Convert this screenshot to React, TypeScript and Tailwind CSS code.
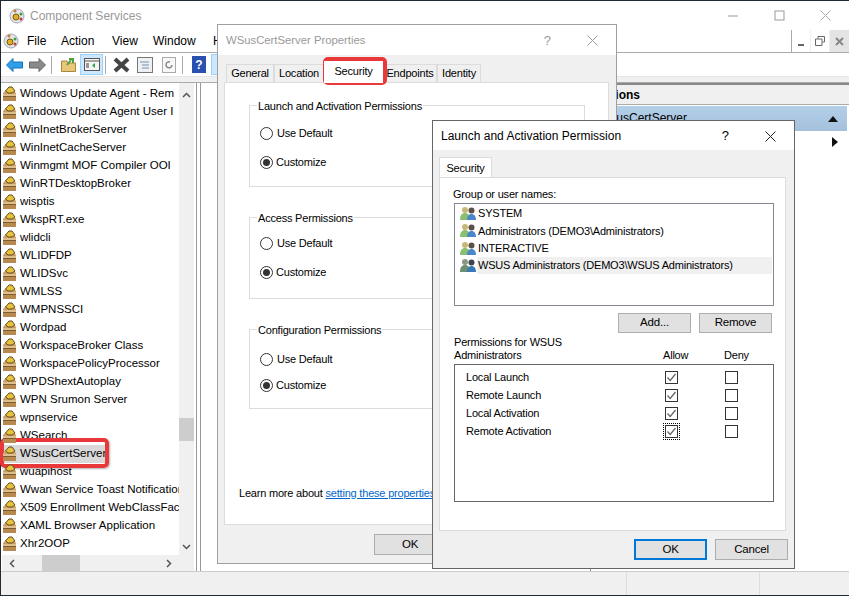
const services = [
  'Windows Update Agent - Rem',
  'Windows Update Agent User I',
  'WinInetBrokerServer',
  'WinInetCacheServer',
  'Winmgmt MOF Compiler OOI',
  'WinRTDesktopBroker',
  'wisptis',
  'WkspRT.exe',
  'wlidcli',
  'WLIDFDP',
  'WLIDSvc',
  'WMLSS',
  'WMPNSSCI',
  'Wordpad',
  'WorkspaceBroker Class',
  'WorkspacePolicyProcessor',
  'WPDShextAutoplay',
  'WPN Srumon Server',
  'wpnservice',
  'WSearch',
  'WSusCertServer',
  'wuapihost',
  'Wwan Service Toast Notification',
  'X509 Enrollment WebClassFactory',
  'XAML Browser Application',
  'Xhr2OOP',
];

const groups = [
  'SYSTEM',
  'Administrators (DEMO3\\Administrators)',
  'INTERACTIVE',
  'WSUS Administrators (DEMO3\\WSUS Administrators)',
];

const perms = ['Local Launch', 'Remote Launch', 'Local Activation', 'Remote Activation'];

const BoxIcon = () => (
  <svg width="14" height="16" viewBox="0 0 14 16" className="relative z-10 shrink-0">
    <path d="M0 7L3 4L10 4L13 7L13 15L0 15Z" fill="#c9a06a" />
    <path d="M2.500 5L6 1L9 1L12 5L9 7L5 7Z" fill="#e9c23c" stroke="#5f4b1c" strokeWidth="1" />
    <rect x="0" y="8" width="13" height="2" fill="#e0bd8c" />
    <rect x="0" y="10" width="13" height="1" fill="#7d5c30" />
    <rect x="0" y="11" width="13" height="4" fill="#b88a52" />
  </svg>
);

const AppIcon = () => (
  <svg width="16" height="16" viewBox="0 0 16 16" className="shrink-0">
    <circle cx="8" cy="8" r="7" fill="#e4e4e8" stroke="#a8a8b0" />
    <circle cx="7" cy="9" r="3" fill="#e0b020" stroke="#7a5a10" />
    <circle cx="12" cy="6" r="1.500" fill="#40a040" />
    <circle cx="12" cy="11" r="1.500" fill="#c04040" />
    <circle cx="6" cy="3" r="1.500" fill="#c08040" />
  </svg>
);

const UsersIcon = ({ dim }: { dim?: boolean }) => (
  <svg width="17" height="15" viewBox="0 0 17 15" className="shrink-0">
    <circle cx="5" cy="4" r="3" fill={dim ? '#8a9a80' : '#c8b878'} />
    <path d="M0 14 C0 9 2 7 5 7 C8 7 10 9 10 14 Z" fill={dim ? '#6d9070' : '#8cc070'} />
    <circle cx="11.500" cy="4.500" r="3" fill={dim ? '#3c4450' : '#5a5048'} />
    <path d="M7 14 C7 10 9 8 11.500 8 C14 8 16 10 16 14 Z" fill={dim ? '#3878b8' : '#4888c8'} />
  </svg>
);

const Radio = ({ on }: { on?: boolean }) => (
  <span className="flex h-[13px] w-[13px] shrink-0 items-center justify-center rounded-full border border-[#333] bg-white">
    {on && <span className="h-[7px] w-[7px] rounded-full bg-[#333]" />}
  </span>
);

const Check = ({ on, focus }: { on?: boolean; focus?: boolean }) => (
  <span className={`flex h-[17px] w-[17px] items-center justify-center ${focus ? 'outline-1 outline-offset-[-1px] outline-dotted outline-black' : ''}`}>
    <span className="flex h-[13px] w-[13px] items-center justify-center border border-[#333] bg-white">
      {on && (
        <svg width="11" height="11" viewBox="0 0 11 11">
          <path d="M1.500 5.500 L4.200 8.500 L9.500 2" fill="none" stroke="#666" strokeWidth="1.300" />
        </svg>
      )}
    </span>
  </span>
);

const Btn = ({ label, def, cls }: { label: string; def?: boolean; cls: string }) => (
  <div className={`flex items-center justify-center bg-[#e1e1e1] text-[11.500px] text-black ${def ? 'border-2 border-[#0078d7]' : 'border border-[#adadad]'} ${cls}`}>
    {label}
  </div>
);

const PermGroup = ({ title, cls, gap }: { title: string; cls: string; gap: string }) => (
  <fieldset className={`w-[336px] border border-[#dcdcdc] pl-[10px] ${cls}`}>
    <legend className="relative top-px ml-[-3px] px-[1px] leading-[14px]">{title}</legend>
    <div className={`flex flex-col ${gap}`}>
      <label className="flex h-[16px] items-center gap-[4px]"><Radio /> Use Default</label>
      <label className="flex h-[16px] items-center gap-[3px]"><Radio on /> Customize</label>
    </div>
  </fieldset>
);

export default function App() {
  return (
    <div className="relative h-[596px] w-[849px] overflow-hidden bg-[#1f2a33] font-['Liberation_Sans',sans-serif] text-[12px] text-black">
      {/* main mmc window */}
      <div className="absolute inset-x-0 bottom-px top-px ml-px flex flex-col bg-white">
        <div className="flex h-[29px] shrink-0 items-center pl-[8px]">
          <AppIcon />
          <span className="ml-[5px] text-[#999]">Component Services</span>
          <div className="ml-auto flex items-center">
            <svg width="10" height="10" viewBox="0 0 10 10" className="mr-[36px]"><path d="M0 5H10" stroke="#999" /></svg>
            <svg width="11" height="11" viewBox="0 0 11 11" className="mr-[35px]"><rect x="1" y="1" width="9" height="9" fill="none" stroke="#999" /></svg>
            <svg width="11" height="11" viewBox="0 0 11 11" className="mr-[18px]"><path d="M0.500 0.500L10.500 10.500M10.500 0.500L0.500 10.500" stroke="#aaa" /></svg>
          </div>
        </div>

        <div className="flex h-[23px] shrink-0 items-center border-b border-[#aaa] pl-[2px]">
          <AppIcon />
          <span className="ml-[8px] w-[34px]">File</span>
          <span className="w-[51px]">Action</span>
          <span className="w-[41px]">View</span>
          <span className="w-[60px]">Window</span>
          <span>Help</span>
          <div className="ml-auto flex h-full border-l border-[#aaa] bg-white">
            <span className="flex w-[19px] items-center justify-center border-r border-[#eee]"><span className="mt-[7px] h-[2px] w-[6px] bg-[#666]" /></span>
            <span className="flex w-[19px] items-center justify-center border-r border-[#eee]">
              <svg width="10" height="10" viewBox="0 0 10 10"><path d="M3 2.500V.5H9.500V6H7.500M.5 3H7V9.500H.5Z" fill="none" stroke="#666" /></svg>
            </span>
            <span className="flex w-[19px] items-center justify-center bg-[#e4e4e4]">
              <svg width="9" height="9" viewBox="0 0 9 9"><path d="M1 1L8 8M8 1L1 8" stroke="#888" strokeWidth="2" /></svg>
            </span>
          </div>
        </div>

        {/* toolbar */}
        <div className="flex h-[23px] shrink-0 items-center pl-[5px]">
          <svg width="17" height="14" viewBox="0 0 17 14"><path d="M0.500 7L7 0.500V4H16.500V10H7V13.500Z" fill="#2f9fe8" stroke="#1a70b8" /></svg>
          <svg width="17" height="14" viewBox="0 0 17 14" className="ml-[6px]"><path d="M16.500 7L10 0.500V4H0.500V10H10V13.500Z" fill="#8a8a8a" stroke="#666" /></svg>
          <span className="ml-[5px] h-[18px] w-px bg-[#aaa]" />
          <svg width="15" height="15" viewBox="0 0 15 15" className="ml-[9px]"><path d="M0.500 4H6L7 6H14.500V14.500H0.500Z" fill="#e8c878" stroke="#a88840" /><path d="M6 8L10 3M8 2H12V6" fill="none" stroke="#50a040" strokeWidth="2" /></svg>
          <div className="ml-[4px] flex h-[21px] w-[23px] shrink-0 items-center justify-center border border-[#99d1ff] bg-[#cce8ff]">
            <svg width="16" height="13" viewBox="0 0 16 13"><rect x=".5" y=".5" width="15" height="12" fill="#f4f4f4" stroke="#555" /><path d="M.5 3H15.500" stroke="#555" /><path d="M11 5L8 7.500L11 10Z" fill="#30a050" /><rect x="2" y="5" width="3" height="5" fill="#999" /></svg>
          </div>
          <span className="ml-[2px] h-[18px] w-px bg-[#aaa]" />
          <svg width="17" height="16" viewBox="0 0 17 16" className="ml-[7px]"><path d="M2 2L15 14M15 2L2 14" stroke="#444" strokeWidth="4" /></svg>
          <svg width="16" height="16" viewBox="0 0 16 16" className="ml-[7px]"><rect x=".5" y=".5" width="15" height="15" fill="#f0f0f0" stroke="#777" /><path d="M3 5H12M5 8H12M5 11H12" stroke="#7090b0" /></svg>
          <svg width="14" height="16" viewBox="0 0 14 16" className="ml-[9px]"><rect x=".5" y=".5" width="13" height="15" fill="#f8f8f8" stroke="#aaa" /><path d="M10 8A3 3 0 1 1 8 5" fill="none" stroke="#888" strokeWidth="1.500" /></svg>
          <span className="ml-[6px] h-[18px] w-px bg-[#aaa]" />
          <div className="ml-[9px] flex h-[17px] w-[14px] shrink-0 items-center justify-center bg-[#2a50b0] font-bold text-white">?</div>
          <div className="ml-[5px] h-[21px] w-[23px] shrink-0 border border-[#99d1ff] bg-[#cce8ff]" />
        </div>
        <div className="h-[6px] shrink-0 border-t border-[#e6e6e6] bg-[#f0f0f0]" />

        {/* panes */}
        <div className="flex h-[489px] shrink-0 border-t border-[#aaa] pl-px">
          <div className="relative flex w-[195px] shrink-0 border-r border-[#999] bg-white">
            <div className="w-[177px] overflow-hidden pl-[1px] pt-[2px] text-[11.500px]">
              {services.map((s) => (
                <div key={s} className="flex h-[18px] items-center whitespace-nowrap">
                  <BoxIcon />
                  {s === 'WSusCertServer' ? (
                    <span className="ml-[-14px] flex h-[18px] items-center bg-[#d9d9d9] pl-[17px] pr-[3px]">{s}</span>
                  ) : (
                    <span className="pl-[3px]">{s}</span>
                  )}
                </div>
              ))}
            </div>
            <div className="flex w-[15px] shrink-0 flex-col items-center bg-[#f0f0f0] pb-[21px] pt-[9px]">
              <svg width="9" height="6" viewBox="0 0 9 6"><path d="M1 5L4.500 1.500L8 5" fill="none" stroke="#555" strokeWidth="1.500" /></svg>
              <div className="mt-[320px] h-[23px] w-full bg-[#cdcdcd]" />
              <svg width="9" height="6" viewBox="0 0 9 6" className="mt-auto"><path d="M1 1L4.500 4.500L8 1" fill="none" stroke="#555" strokeWidth="1.500" /></svg>
            </div>
            <div className="absolute bottom-0 left-0 flex h-[16px] w-[177px] items-center justify-between bg-[#f0f0f0] px-[7px]">
              <svg width="6" height="9" viewBox="0 0 6 9"><path d="M5 1L1.500 4.500L5 8" fill="none" stroke="#555" strokeWidth="1.500" /></svg>
              <div className="absolute left-[40px] h-full w-[38px] bg-[#cdcdcd]" />
              <svg width="6" height="9" viewBox="0 0 6 9"><path d="M1 1L4.500 4.500L1 8" fill="none" stroke="#555" strokeWidth="1.500" /></svg>
            </div>
          </div>
          <div className="ml-[3px] w-[391px] shrink-0 border-x border-[#999] bg-white" />
          <div className="ml-[2px] flex-1 border-t-2 border-[#888] bg-white">
            <div className="flex h-[20px] items-center border-b border-[#aaa] bg-[#f0f0f0] pl-[3px] font-bold">Actions</div>
            <div className="mr-[2px] mt-[1px] flex h-[25px] items-start justify-between bg-gradient-to-b from-[#b4cfe8] to-[#a4c0dc] pl-[4px] pr-[9px] pt-[3px]">
              WSusCertServer
              <svg width="10" height="6" viewBox="0 0 10 6" className="mt-[7px]"><path d="M0 6L5 0L10 6Z" fill="#111" /></svg>
            </div>
            <div className="flex h-[22px] items-center justify-end pr-[11px]">
              <svg width="6" height="10" viewBox="0 0 6 10"><path d="M0 0L6 5L0 10Z" fill="#111" /></svg>
            </div>
          </div>
        </div>

        {/* status bar */}
        <div className="flex flex-1 border-t border-[#ccc] bg-[#f0f0f0]">
          <div className="w-[626px] border-r border-[#ddd]" />
          <div className="w-[133px] border-r border-[#ddd]" />
        </div>
      </div>

      {/* red mark on the selected service */}
      <div className="absolute left-0 top-[438px] h-[30px] w-[109px] rounded-[5px] border-4 border-[#e8383a] shadow-[1px_1px_2px_rgba(0,0,0,0.3)]" />

      {/* properties dialog */}
      <div className="absolute left-[217px] top-[24px] flex h-[540px] w-[400px] flex-col border border-[#a0a0a0] bg-[#f0f0f0] text-[11px] tracking-[-0.2px]">
        <div className="flex h-[30px] shrink-0 items-center bg-white pl-[8px] pt-[1px] text-[11.300px] tracking-normal text-[#999]">
          WSusCertServer Properties
          <span className="ml-auto mr-[36px] text-[13px]">?</span>
          <svg width="11" height="11" viewBox="0 0 11 11" className="mr-[18px]"><path d="M0.500 0.500L10.500 10.500M10.500 0.500L0.500 10.500" stroke="#999" /></svg>
        </div>
        <div className="flex h-[27px] shrink-0 items-end pl-[8px]">
          {[
            ['General', 'w-[48px]'],
            ['Location', 'w-[50px]'],
            ['Security', 'w-[59px]'],
            ['Endpoints', 'w-[54px]'],
            ['Identity', 'w-[44px]'],
          ].map(([t, w]) =>
            t === 'Security' ? (
              <div key={t} className={`z-10 mb-[-1px] flex h-[22px] items-start justify-center bg-white pt-[2px] ${w}`}>{t}</div>
            ) : (
              <div key={t} className={`flex h-[18px] items-center justify-center border border-b-0 border-[#dcdcdc] bg-[#f0f0f0] ${w}`}>{t}</div>
            ),
          )}
        </div>
        <div className="ml-[6px] h-[443px] w-[385px] shrink-0 border border-[#dcdcdc] bg-white pl-[24px]">
          <PermGroup title="Launch and Activation Permissions" cls="mt-[15px] h-[89px] pt-[13px]" gap="gap-[13px]" />
          <PermGroup title="Access Permissions" cls="mt-[23px] h-[89px] pt-[11px]" gap="gap-[13px]" />
          <PermGroup title="Configuration Permissions" cls="mt-[23px] h-[87px] pt-[15px]" gap="gap-[10px]" />
          <div className="ml-[-10px] mt-[76px] leading-[16px]">
            Learn more about <span className="text-[#0066cc] underline">setting these properties</span>.
          </div>
        </div>
        <div className="flex flex-1 items-start pl-[156px] pt-[9px]">
          <Btn label="OK" cls="h-[21px] w-[72px]" />
        </div>
      </div>
      {/* red mark on the Security tab */}
      <div className="absolute left-[323px] top-[57px] h-[28px] w-[64px] rounded-[5px] border-4 border-[#e8383a]" />

      {/* permission dialog */}
      <div className="absolute left-[432px] top-[120px] flex h-[449px] w-[363px] flex-col border border-[#666] bg-[#f0f0f0] text-[11px] tracking-[-0.2px]">
        <div className="flex h-[29px] shrink-0 items-center bg-white pl-[8px] pt-[1px] text-[12px] tracking-normal">
          Launch and Activation Permission
          <span className="ml-auto mr-[36px] text-[13px]">?</span>
          <svg width="11" height="11" viewBox="0 0 11 11" className="mr-[18px]"><path d="M0.500 0.500L10.500 10.500M10.500 0.500L0.500 10.500" stroke="#222" /></svg>
        </div>
        <div className="ml-[6px] mt-[7px] flex h-[21px] w-[53px] shrink-0 items-center justify-center border border-b-0 border-[#dcdcdc] bg-white">Security</div>
        <div className="ml-[6px] mt-[-1px] h-[354px] w-[347px] shrink-0 border border-[#dcdcdc] bg-white pl-[13px]">
          <div className="mt-[8px] h-[17px] leading-[17px]">Group or user names:</div>
          <div className="ml-px h-[103px] w-[320px] border border-[#828790] pl-[5px] pr-[1px] pt-[1px]">
            {groups.map((g, i) => (
              <div key={g} className="flex h-[17.300px] items-center">
                <UsersIcon dim={i === 3} />
                <span className={`flex h-full flex-1 items-center whitespace-nowrap pl-px ${i === 3 ? 'bg-[#f0f0f0]' : ''}`}>{g}</span>
              </div>
            ))}
          </div>
          <div className="ml-px mt-[7px] flex h-[20px] w-[320px] justify-end gap-[8px] pr-[2px]">
            <Btn label="Add..." cls="w-[73px]" />
            <Btn label="Remove" cls="w-[73px]" />
          </div>
          <div className="ml-px mt-[3px] flex h-[26px] w-[320px] items-end leading-[13px]">
            <div className="w-[209px]">Permissions for WSUS<br />Administrators</div>
            <div className="w-[61px]">Allow</div>
            <div>Deny</div>
          </div>
          <div className="ml-px mt-[2px] h-[138px] w-[320px] border border-[#666] pt-[3px]">
            {perms.map((p, i) => (
              <div key={p} className="flex h-[18px] items-center pl-[11px]">
                <span className="w-[197px]">{p}</span>
                <Check on focus={i === 3} />
                <span className="w-[43px]" />
                <Check />
              </div>
            ))}
          </div>
        </div>
        <div className="flex flex-1 justify-end gap-[8px] pr-[6px] pt-[8px]">
          <Btn label="OK" def cls="h-[21px] w-[73px]" />
          <Btn label="Cancel" cls="h-[21px] w-[73px]" />
        </div>
      </div>
    </div>
  );
}
